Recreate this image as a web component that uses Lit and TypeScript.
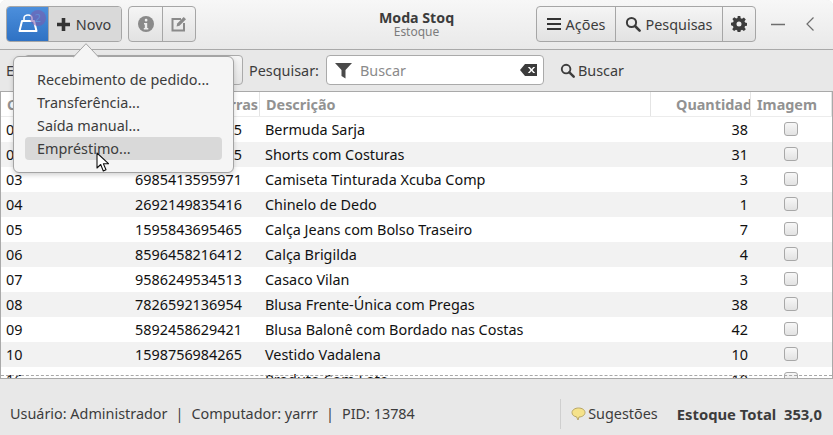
import { LitElement, html, css } from "lit";
import { customElement } from "lit/decorators.js";

const rows = [
  ["01", "2692149835465", "Bermuda Sarja", "38"],
  ["02", "1595843695465", "Shorts com Costuras", "31"],
  ["03", "6985413595971", "Camiseta Tinturada Xcuba Comp", "3"],
  ["04", "2692149835416", "Chinelo de Dedo", "1"],
  ["05", "1595843695465", "Calça Jeans com Bolso Traseiro", "7"],
  ["06", "8596458216412", "Calça Brigilda", "4"],
  ["07", "9586249534513", "Casaco Vilan", "3"],
  ["08", "7826592136954", "Blusa Frente-Única com Pregas", "38"],
  ["09", "5892458629421", "Blusa Balonê com Bordado nas Costas", "42"],
  ["10", "1598756984265", "Vestido Vadalena", "10"],
  ["16", "", "Produto Com Lote", "10"],
];

const search = (size: number) => html`<svg width=${size} height=${size} viewBox="0 0 16 16"><circle cx="6.500" cy="6.500" r="4.600" fill="none" stroke="#3c3c3c" stroke-width="2"/><path d="M10 10l4.600 4.600" stroke="#3c3c3c" stroke-width="2.600" stroke-linecap="round"/></svg>`;

@customElement("app-root")
export class AppRoot extends LitElement {
  static styles = css`
    :host { display: block; width: 833px; height: 435px; overflow: hidden; background: #fff; }
    * { box-sizing: border-box; }
    .win { position: relative; width: 833px; height: 435px; display: flex; flex-direction: column; background: #e8e8e8; border-radius: 6px 6px 0 0; overflow: hidden; font-family: "Noto Sans", sans-serif; font-size: 14.4px; color: #3c3c3c; }
    .head { height: 50px; flex: none; display: grid; grid-template-columns: 1fr auto 1fr; align-items: center; padding: 0 6px 1px; background: linear-gradient(#f7f7f7, #e9e9e9); border-bottom: 1px solid #a9a9a9; }
    .left, .right { display: flex; align-items: center; }
    .right { justify-content: flex-end; }
    .group { display: flex; height: 36px; border: 1px solid #a6a6a6; border-radius: 4px; overflow: hidden; background: linear-gradient(#f5f5f5, #e2e2e2); }
    .group + .group { margin-left: 6px; }
    .btn { display: flex; align-items: center; justify-content: center; gap: 5px; border-left: 1px solid #a6a6a6; height: 100%; }
    .btn:first-child { border-left: 0; }
    .bag { width: 41px; background: linear-gradient(#4c8fdc, #2f72c4); position: relative; }
    .badge { position: absolute; left: 23px; top: 3px; width: 16px; height: 16px; border-radius: 50%; background: rgba(125, 90, 170, 0.55); color: #5f8fd6; font-size: 11px; line-height: 16px; text-align: center; }
    .novo { width: 73px; padding-right: 3px; background: #d9d9d9; }
    .ico { width: 33px; }
    .acoes { width: 78px; }
    .pesq { width: 107px; gap: 4px; }
    .gear { width: 33px; }
    .title { text-align: center; line-height: 14px; padding-top: 1px; }
    .t1 { font-weight: 700; font-size: 14.2px; color: #3c3c3c; }
    .t2 { font-size: 12px; color: #7c7c7c; }
    .winbtns { display: flex; align-items: center; margin-left: 15px; gap: 21px; padding-right: 13px; }
    .bar { height: 42px; flex: none; display: flex; align-items: center; padding: 0 0 1px 6px; border-bottom: 1px solid #a9a9a9; background: #e8e8e8; }
    .lbl { width: 18px; }
    .combo { width: 219px; height: 30px; border: 1px solid #aaa; border-radius: 4px; background: linear-gradient(#f5f5f5, #e4e4e4); }
    .pl { margin-left: 6px; }
    .entry { margin-left: 7px; width: 218px; height: 30px; border: 1px solid #aaa; border-radius: 4px; background: #fff; display: flex; align-items: center; padding: 0 6px 0 8px; }
    .entry span { color: #8a8a8a; margin-left: 8px; flex: 1; }
    .find { display: flex; align-items: center; gap: 3px; margin-left: 16px; }
    .table { flex: 1; min-height: 0; position: relative; overflow: hidden; background: #fff; border: solid #a9a9a9; border-width: 0 1px; }
    .row { display: grid; grid-template-columns: 129px 130px 391px 100px 81px; height: 25px; align-items: center; color: #111; }
    .row.alt { background: #f2f2f2; }
    .row > div { padding: 0 5px; white-space: nowrap; }
    .row .num { text-align: right; padding-right: 3px; }
    .row .chk { padding: 0 0 2px 33px; display: flex; }
    .box { width: 14px; height: 14px; border: 1px solid #a8a8a8; border-radius: 3px; background: linear-gradient(#f7f7f7, #e2e2e2); }
    .hrow { display: grid; grid-template-columns: 129px 130px 391px 100px 81px; height: 25px; align-items: center; font-weight: 700; color: #929292; border-bottom: 1px solid #ececec; }
    .hrow > div { height: 100%; display: flex; align-items: center; padding: 0 6px; border-right: 1px solid #e4e4e4; white-space: nowrap; overflow: hidden; }
    .hrow .r { justify-content: flex-end; padding: 0 1px; }
    .hrow .q { padding: 0 0 0 25px; }
    .dash { position: absolute; left: 0; right: 0; bottom: 2px; border-top: 1px dashed #a8a8a8; }
    .status { height: 57px; flex: none; display: flex; align-items: center; padding: 13px 11px 0 10px; border-top: 1px solid #a9a9a9; background: #e8e8e8; font-size: 14.4px; }
    .who { flex: 1; }
    .who i { font-style: normal; margin: 0 8px; }
    .sep { width: 1px; height: 30px; background: #cfcfcf; margin-right: 10px; }
    .sug { display: flex; align-items: center; gap: 2px; }
    .tot { font-weight: 700; font-size: 14.8px; margin-left: 19px; }
    .pop { position: absolute; left: 13px; top: 56px; width: 221px; height: 117px; background: #f5f5f5; border: 1px solid #a4a4a4; border-radius: 6px; box-shadow: 0 2px 5px rgba(0,0,0,.18); padding: 11px 11px; display: flex; flex-direction: column; }
    .arrow { position: absolute; left: 59px; top: -14px; }
    .item { height: 23px; line-height: 23px; padding: 0 12px; border-radius: 4px; color: #3c3c3c; white-space: nowrap; }
    .item.on { background: #d9d9d9; }
    .cursor { position: absolute; left: 96px; top: 152px; }
  `;

  render() {
    return html`<div class="win">
      <div class="head">
        <div class="left">
          <div class="group">
            <div class="btn bag">
              <svg width="22" height="20" viewBox="0 0 22 20"><path d="M5 7h12l2.500 10H2.500z" fill="none" stroke="#fff" stroke-width="2" stroke-linejoin="round"/><path d="M7 7V4a4 3 0 0 1 8 0v3" fill="none" stroke="#fff" stroke-width="1.600"/></svg>
              <div class="badge">2</div>
            </div>
            <div class="btn novo">
              <svg width="15" height="15" viewBox="0 0 15 15"><path d="M5.700 1h3.600v4.700h4.700v3.600H9.300V14H5.700V9.300H1V5.700h4.700z" fill="#333"/></svg>
              <span>Novo</span>
            </div>
          </div>
          <div class="group">
            <div class="btn ico">
              <svg width="16" height="16" viewBox="0 0 16 16"><circle cx="8" cy="8" r="8" fill="#8a8a8a"/><rect x="6.800" y="2.800" width="2.600" height="2.600" rx="1" fill="#eee"/><path d="M6 7h3.200v5H10.300v1.400H5.800V12h1v-3.600H6z" fill="#eee"/></svg>
            </div>
            <div class="btn ico">
              <svg width="16" height="16" viewBox="0 0 16 16"><path d="M10 3H1.500v11.500H13V7" fill="none" stroke="#8a8a8a" stroke-width="2"/><path d="M5.500 10.500l.7-3L12.700 1 15 3.300 8.500 9.800z" fill="#8a8a8a"/></svg>
            </div>
          </div>
        </div>
        <div class="title"><div class="t1">Moda Stoq</div><div class="t2">Estoque</div></div>
        <div class="right">
          <div class="group">
            <div class="btn acoes">
              <svg width="14" height="14" viewBox="0 0 14 14"><path d="M0 2h14M0 7h14M0 12h14" stroke="#333" stroke-width="2"/></svg>
              <span>Ações</span>
            </div>
            <div class="btn pesq">${search(16)}<span>Pesquisas</span></div>
            <div class="btn gear">
              <svg width="16" height="16" viewBox="0 0 16 16"><path fill="#3c3c3c" fill-rule="evenodd" d="M6.700 0h2.600l.4 2.200 1.300.6 1.900-1.300 1.900 1.900-1.300 1.900.6 1.300 2.200.4v2.600l-2.200.4-.6 1.300 1.300 1.900-1.900 1.900-1.900-1.300-1.300.6-.4 2.200H6.700l-.4-2.200-1.300-.6-1.900 1.300-1.900-1.900 1.300-1.900-.6-1.300L-.1 9.300V6.700l2.200-.4.6-1.300L1.400 3.100l1.900-1.900 1.900 1.300 1.300-.6zM8 5.500a2.500 2.500 0 1 0 0 5 2.500 2.500 0 0 0 0-5z"/></svg>
            </div>
          </div>
          <div class="winbtns">
            <svg width="14" height="14" viewBox="0 0 14 14"><path d="M0 7.500h14" stroke="#6e6e6e" stroke-width="1.300"/></svg>
            <svg width="8" height="14" viewBox="0 0 8 14"><path d="M7.500 .5L1 7l6.500 6.500" fill="none" stroke="#6e6e6e" stroke-width="1.200"/></svg>
          </div>
        </div>
      </div>
      <div class="bar">
        <span class="lbl">E</span>
        <div class="combo"></div>
        <span class="pl">Pesquisar:</span>
        <div class="entry">
          <svg width="17" height="17" viewBox="0 0 17 17"><path d="M0 1h17l-6.500 7v8.500l-4-2.500V8z" fill="#4a4a4a"/></svg>
          <span>Buscar</span>
          <svg width="17" height="12" viewBox="0 0 17 12"><path fill="#3c3c3c" fill-rule="evenodd" d="M5 0h12v12H5L0 6zM7.800 3l2.700 3-2.700 3h2l1.700-1.900L13.200 9h2l-2.700-3 2.700-3h-2l-1.700 1.900L9.800 3z"/></svg>
        </div>
        <div class="find">${search(15)}<span>Buscar</span></div>
      </div>
      <div class="table">
        <div class="hrow"><div>Código</div><div class="r">Código de Barras</div><div>Descrição</div><div class="q">Quantidade</div><div>Imagem</div></div>
        ${rows.map((r, i) => html`<div class="row ${i % 2 ? "alt" : ""}">
          <div>${r[0]}</div><div>${r[1]}</div><div>${r[2]}</div><div class="num">${r[3]}</div><div class="chk"><div class="box"></div></div>
        </div>`)}
        <div class="dash"></div>
      </div>
      <div class="status">
        <div class="who">Usuário: Administrador<i>|</i>Computador: yarrr<i>|</i>PID: 13784</div>
        <div class="sep"></div>
        <div class="sug">
          <svg width="15" height="14" viewBox="0 0 15 14"><path d="M7.500 1C11 1 14 2.800 14 5.500S11 10 8 10l-1 3-1.500-3.200C3 9.500 1 8 1 5.500S4 1 7.500 1z" fill="#f5e28a" stroke="#b9a766" stroke-width="1"/></svg>
          <span>Sugestões</span>
        </div>
        <div class="tot">Estoque Total&nbsp; 353,0</div>
      </div>
      <div class="pop">
        <svg class="arrow" width="26" height="15" viewBox="0 0 26 15"><path d="M0 14.500L13 .7 26 14.500" fill="#f5f5f5" stroke="#a4a4a4"/></svg>
        <div class="item">Recebimento de pedido...</div>
        <div class="item">Transferência...</div>
        <div class="item">Saída manual...</div>
        <div class="item on">Empréstimo...</div>
      </div>
      <svg class="cursor" width="14" height="21" viewBox="0 0 14 21"><path d="M1 1v15l3.700-3.500 2.600 6.500 2.700-1.200-2.600-6.100H12.500z" fill="#fff" stroke="#111" stroke-width="1.100" stroke-linejoin="round"/></svg>
    </div>`;
  }
}
